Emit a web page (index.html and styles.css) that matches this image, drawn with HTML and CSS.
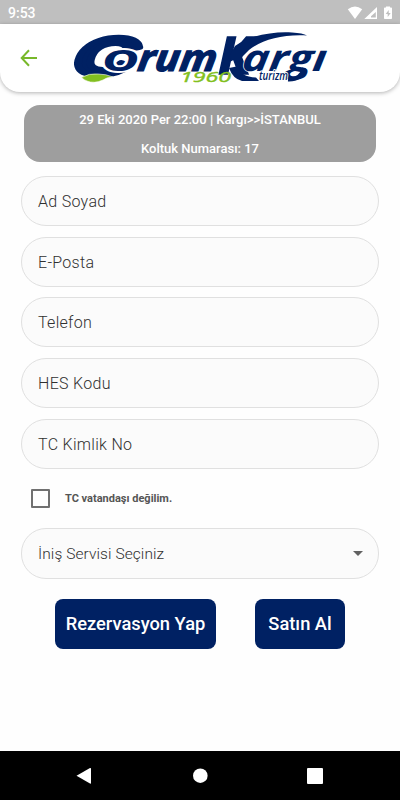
FILE: index.html
```html
<!DOCTYPE html>
<html lang="tr">
<head>
<meta charset="utf-8">
<title>Çorum Kargı Turizm</title>
<link rel="stylesheet" href="styles.css">
</head>
<body>
<div class="status"><span>9:53</span>
<svg width="46" height="16" viewBox="347 4 46 16" fill="#fff"><path d="M347.8 8.2Q355 3 362.2 8.2L355 18Z"/><path fill-rule="evenodd" d="M377 6V18H364.3ZM375.8 11V16.5H371V15.3Z"/><path fill-rule="evenodd" d="M386 6.5V5.5h4v1h1.2q.8 0 .8.8v9.9q0 .8-.8.8h-6.4q-.8 0-.8-.8V7.3q0-.8.8-.8ZM388.7 9l-3 4h2v3l3-4h-2Z"/></svg></div>
<header class="header">
<svg class="back" width="18" height="18" viewBox="0 0 18 18" fill="none" stroke="#78b82a" stroke-width="2"><path d="M17 9H2M9 1.3L1.7 9L9 16.7"/></svg>
<svg class="logo" width="260" height="60" viewBox="70 28 260 60">
<text class="initial" transform="translate(70.5 75) skewX(-14)" textLength="61" lengthAdjust="spacingAndGlyphs">C</text>
<path fill="#82bf20" stroke="#fff" stroke-width=".6" d="M81.5 77.5Q89 73 98 74Q106 74 113 77Q107 77 103 80Q94 84 87 81Q84 80 81.5 77.5Z"/>
<text class="ring" transform="translate(103 71)" textLength="36" lengthAdjust="spacingAndGlyphs">o</text>
<g class="word"><text transform="translate(136.5 71) skewX(-8)" textLength="79" lengthAdjust="spacingAndGlyphs">rum</text></g>
<text class="kay" transform="translate(218 74)" textLength="33" lengthAdjust="spacingAndGlyphs">K</text>
<path fill="#002163" d="M235 46C250 35 275 31 292 32.4Q303 33 307 35.5C283 34 261 40 249 50Q243 55 239 62L228 58Z"/>
<path fill="#002163" d="M229 68L239 66Q240 77 256 77.5L259 81H242Q233 79 229 68Z"/>
<g class="word arg"><text transform="translate(241 71) skewX(-8)" textLength="84" lengthAdjust="spacingAndGlyphs">argı</text></g>
<path d="M288 79.5Q301 80 304 68" fill="none" stroke="#002163" stroke-width="4"/>
<text class="year" transform="translate(180 81.7)" textLength="51" lengthAdjust="spacingAndGlyphs">1960</text>
<text class="turizm" x="259" y="80" textLength="29" lengthAdjust="spacingAndGlyphs">turizm</text>
</svg>
</header>
<main>
<section class="trip"><div>29 Eki 2020 Per 22:00 | Kargı&gt;&gt;İSTANBUL</div><div>Koltuk Numarası: 17</div></section>
<form class="form">
<div class="field"><span>Ad Soyad</span></div>
<div class="field"><span>E-Posta</span></div>
<div class="field"><span>Telefon</span></div>
<div class="field"><span>HES Kodu</span></div>
<div class="field"><span>TC Kimlik No</span></div>
</form>
<label class="check"><i></i><span>TC vatandaşı değilim.</span></label>
<div class="field select"><span>İniş Servisi Seçiniz</span><svg width="10" height="5"><path d="M0 0H10L5 5Z" fill="#616161"/></svg></div>
<div class="actions"><button class="reserve">Rezervasyon Yap</button><button class="buy">Satın Al</button></div>
</main>
<nav><svg width="400" height="49" viewBox="0 751 400 49" fill="#fff"><path d="M76.5 775.7L90 768Q91 767.5 91 769V783Q91 784 90 783.5Z"/><circle cx="200.3" cy="775.7" r="7.3"/><rect x="307" y="768" width="16" height="16" rx="1"/></svg></nav>
</body>
</html>
```
FILE: styles.css
```css
* { box-sizing: border-box; }
body { margin: 0; width: 400px; height: 800px; overflow: hidden; background: #fefefe; font-family: Roboto, sans-serif; display: flex; flex-direction: column; }
.status { height: 24px; flex: none; background: #bfbfbf; color: #fff; font-size: 14px; font-weight: 500; display: flex; justify-content: space-between; align-items: center; padding: 1px 7px 0 8px; }
.header { height: 68px; flex: none; background: #fff; border-radius: 0 0 20px 20px; box-shadow: 0 1px 4px rgba(0,0,0,.3); display: flex; align-items: flex-start; padding: 4px 0 0 20px; }
.back { margin-top: 21px; }
.logo { margin-left: 32px; overflow: visible; }
.initial { font: italic 700 54px "Liberation Sans", sans-serif; fill: #002163; stroke: #002163; stroke-width: 5px; stroke-linejoin: round; }
.ring { font: italic 700 39px "Liberation Sans", sans-serif; fill: #002163; stroke: #fff; stroke-width: 4px; paint-order: stroke; }
.kay { font: italic 700 52px "Open Sans", sans-serif; fill: #002163; stroke: #002163; stroke-width: 1.5px; }
.word { font: italic 700 37px "Open Sans", sans-serif; fill: #002163; stroke: #002163; stroke-width: 1.2px; }
.arg text { stroke: #fff; stroke-width: 1.2px; paint-order: stroke; }
.year { font: italic 400 15px "Open Sans", sans-serif; fill: #82bf20; stroke: #82bf20; stroke-width: .4px; }
.turizm { font: italic 600 12px "Open Sans", sans-serif; fill: #002163; stroke: #fff; stroke-width: 2px; paint-order: stroke; }
main { flex: 1; padding: 13px 21px 0; }
.trip { height: 57px; margin: 0 3px; border-radius: 16px; background: #9e9e9e; color: #fff; font-size: 13px; font-weight: 500; line-height: 29px; text-align: center; }
.form { margin-top: 14px; display: flex; flex-direction: column; gap: 10.65px; }
.field { height: 50px; border: 1px solid #e0e0e0; border-radius: 25px; background: #fbfbfb; color: #303030; font-size: 16px; font-weight: 300; letter-spacing: .3px; display: flex; align-items: center; justify-content: space-between; padding: 1px 15px 0 16px; }
.check { height: 59px; display: flex; align-items: center; padding-left: 10px; gap: 15px; color: #555; font-size: 11px; font-weight: 700; }
.check i { width: 19px; height: 19px; border: 2px solid #707070; border-radius: 1px; }
.select { height: 51px; font-size: 15.5px; letter-spacing: .08px; }
.actions { margin-top: 20px; display: flex; gap: 39px; padding-left: 34px; }
button { height: 50px; padding: 0; border: 0; border-radius: 8px; background: #002163; color: #fff; font: 500 18.3px Roboto, sans-serif; }
.reserve { width: 161px; }
.buy { width: 90px; }
nav { height: 49px; flex: none; background: #000; }
nav svg { display: block; }
```
